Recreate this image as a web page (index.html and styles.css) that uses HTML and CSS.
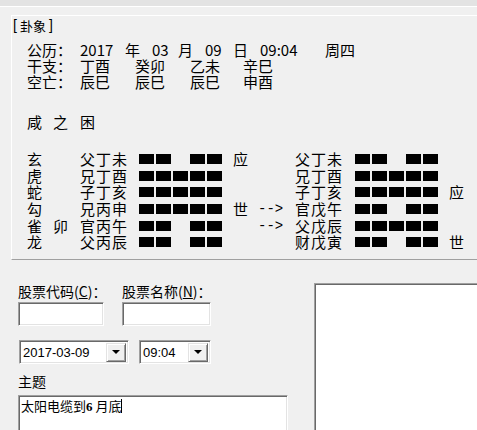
FILE: index.html
```html
<!DOCTYPE html>
<html lang="zh">
<head>
<meta charset="utf-8">
<link rel="stylesheet" href="styles.css">
</head>
<body>
<div class="strip"></div>
<div class="band"></div>
<section class="panel">
  <div class="title"><span class="br">[</span>卦象<span class="br br-r">]</span></div>
  <div class="info">
    <div class="row"><span class="lab">公历：</span><span class="w45">2017</span><span class="w27">年</span><span class="w26">03</span><span class="w27">月</span><span class="w28">09</span><span class="w27">日</span><span class="w65">09:04</span><span>周四</span></div>
    <div class="row"><span class="lab">干支：</span><span class="gz">丁酉</span><span class="gz">癸卯</span><span class="gz2">乙未</span><span>辛巳</span></div>
    <div class="row"><span class="lab">空亡：</span><span class="gz">辰巳</span><span class="gz">辰巳</span><span class="gz2">辰巳</span><span>申酉</span></div>
  </div>
  <div class="gua-name"><span class="gn1">咸</span><span class="gn2">之</span><span>困</span></div>
  <div class="hex">
    <span>玄</span><span></span><span>父丁未</span><div class="bars"><i></i><i></i><b></b><i></i><i></i></div><span class="sy">应</span><span class="arr"></span><span>父丁未</span><div class="bars"><i></i><i></i><b></b><i></i><i></i></div><span class="sy"></span>
    <span>虎</span><span></span><span>兄丁酉</span><div class="bars"><i></i><i></i><i></i><i></i><i></i></div><span class="sy"></span><span class="arr"></span><span>兄丁酉</span><div class="bars"><i></i><i></i><i></i><i></i><i></i></div><span class="sy"></span>
    <span>蛇</span><span></span><span>子丁亥</span><div class="bars"><i></i><i></i><i></i><i></i><i></i></div><span class="sy"></span><span class="arr"></span><span>子丁亥</span><div class="bars"><i></i><i></i><i></i><i></i><i></i></div><span class="sy">应</span>
    <span>勾</span><span></span><span>兄丙申</span><div class="bars"><i></i><i></i><i></i><i></i><i></i></div><span class="sy">世</span><span class="arr">--&gt;</span><span>官戊午</span><div class="bars"><i></i><i></i><b></b><i></i><i></i></div><span class="sy"></span>
    <span>雀</span><span>卯</span><span>官丙午</span><div class="bars"><i></i><i></i><b></b><i></i><i></i></div><span class="sy"></span><span class="arr">--&gt;</span><span>父戊辰</span><div class="bars"><i></i><i></i><i></i><i></i><i></i></div><span class="sy"></span>
    <span>龙</span><span></span><span>父丙辰</span><div class="bars"><i></i><i></i><b></b><i></i><i></i></div><span class="sy"></span><span class="arr"></span><span>财戊寅</span><div class="bars"><i></i><i></i><b></b><i></i><i></i></div><span class="sy">世</span>
  </div>
</section>
<div class="lower">
  <div class="form">
    <div class="fields">
      <label>股票代码(<u>C</u>)：</label>
      <label>股票名称(<u>N</u>)：</label>
      <div class="edit e1"></div>
      <div class="edit e2"></div>
    </div>
    <div class="combos">
      <div class="combo c-date"><span class="val">2017-03-09</span><span class="drop"><span class="tri"></span></span></div>
      <div class="combo c-time"><span class="val">09:04</span><span class="drop"><span class="tri"></span></span></div>
    </div>
    <div class="subject">主题</div>
    <div class="edit memo">太阳电缆到<b class="num">6</b> 月底<span class="caret"></span></div>
  </div>
  <div class="edit output"></div>
</div>
</body>
</html>
```

FILE: styles.css
```css
html, body {
  margin: 0;
  padding: 0;
}
body {
  width: 477px;
  height: 430px;
  overflow: hidden;
  background: #f0f0f0;
  color: #000;
  font-family: "Noto Sans CJK SC", "Noto Sans", sans-serif;
}
.strip {
  height: 6px;
  background: #e3e3e3;
  border-bottom: 1px solid #fff;
}
.band {
  height: 8px;
}
.panel {
  margin-left: 11px;
  height: 245px;
  box-sizing: border-box;
  border-top: 1px solid #fff;
  border-left: 1px solid #fff;
  border-bottom: 1px solid #a0a0a0;
}
.title {
  margin-top: 2px;
  font-size: 13px;
  line-height: 15px;
  display: flex;
  align-items: center;
}
.br {
  font-family: "Liberation Sans", sans-serif;
  font-size: 14px;
  padding-left: 1px;
  margin-right: 3px;
}
.br-r {
  margin: 0 0 0 3px;
  padding: 0;
}
.info {
  margin: 9px 0 0 15px;
  font-size: 15px;
  line-height: 16px;
}
.row {
  display: flex;
  white-space: nowrap;
}
.row > span { flex: none; }
.lab { width: 53px; }
.w45 { width: 45px; }
.w27 { width: 27px; }
.w26 { width: 26px; }
.w28 { width: 28px; }
.w65 { width: 65px; }
.gz { width: 55px; }
.gz2 { width: 53px; }
.gua-name {
  margin: 24px 0 0 15px;
  display: flex;
  font-size: 15px;
  line-height: 16px;
}
.gn1 { width: 26px; }
.gn2 { width: 27px; }
.hex {
  margin: 21px 0 0 15px;
  display: grid;
  grid-template-columns: 26px 27px 59px 83px 36px 37px 60px 83px auto;
  grid-auto-rows: 16.6px;
  align-items: center;
  font-size: 15px;
  line-height: 16px;
  white-space: nowrap;
}
.hex > span:nth-child(9n+3),
.hex > span:nth-child(9n+7) {
  letter-spacing: 1px;
}
.sy {
  padding-left: 11px;
}
.arr {
  font-family: "Liberation Mono", monospace;
  font-size: 14px;
}
.bars {
  display: flex;
  gap: 2px;
  height: 10px;
}
.bars i, .bars b {
  display: block;
  width: 15px;
  height: 10px;
  background: #000;
}
.bars b {
  background: transparent;
}
.lower {
  display: flex;
  padding-left: 18px;
}
.form {
  width: 270px;
  padding-top: 23px;
  flex: none;
}
.fields {
  display: grid;
  grid-template-columns: 104px auto;
  row-gap: 3px;
  font-size: 14px;
  line-height: 16px;
}
.fields label { white-space: nowrap; }
.edit {
  box-sizing: border-box;
  background: #fff;
  border: 1px solid;
  border-color: #a0a0a0 #fff #fff #a0a0a0;
  box-shadow: inset 1px 1px 0 #696969, inset -1px -1px 0 #e3e3e3;
}
.e1 { width: 86px; height: 24px; }
.e2 { width: 89px; height: 24px; }
.combos {
  display: flex;
  gap: 10px;
  margin: 14px 0 0 1px;
}
.combo {
  box-sizing: border-box;
  height: 24px;
  display: flex;
  align-items: center;
  justify-content: space-between;
  background: #fff;
  border: 1px solid;
  border-color: #a0a0a0 #fff #fff #a0a0a0;
  box-shadow: inset 1px 1px 0 #696969, inset -1px -1px 0 #e3e3e3;
  padding: 2px;
  font-family: "Liberation Sans", sans-serif;
  font-size: 13px;
}
.c-date { width: 110px; }
.c-time { width: 72px; }
.val { padding-left: 1px; white-space: nowrap; }
.drop {
  flex: none;
  box-sizing: border-box;
  width: 20px;
  height: 19px;
  background: #f0f0f0;
  border: 1px solid;
  border-color: #e3e3e3 #696969 #696969 #e3e3e3;
  box-shadow: inset 1px 1px 0 #fff, inset -1px -1px 0 #a0a0a0;
  display: flex;
  align-items: center;
  justify-content: center;
}
.tri {
  width: 0;
  height: 0;
  border-left: 4px solid transparent;
  border-right: 4px solid transparent;
  border-top: 4px solid #000;
}
.subject {
  margin-top: 9px;
  font-size: 14px;
  line-height: 16px;
}
.memo {
  margin-top: 6px;
  width: 270px;
  height: 60px;
  padding: 1px 2px;
  font-size: 13px;
  line-height: 17px;
  white-space: nowrap;
}
.num {
  font-family: "Liberation Serif", serif;
  font-weight: bold;
}
.caret {
  display: inline-block;
  width: 1px;
  height: 14px;
  background: #000;
  vertical-align: -2px;
}
.output {
  flex: none;
  margin: 23px 0 0 26px;
  width: 200px;
  height: 200px;
  border-width: 1px;
}
```
